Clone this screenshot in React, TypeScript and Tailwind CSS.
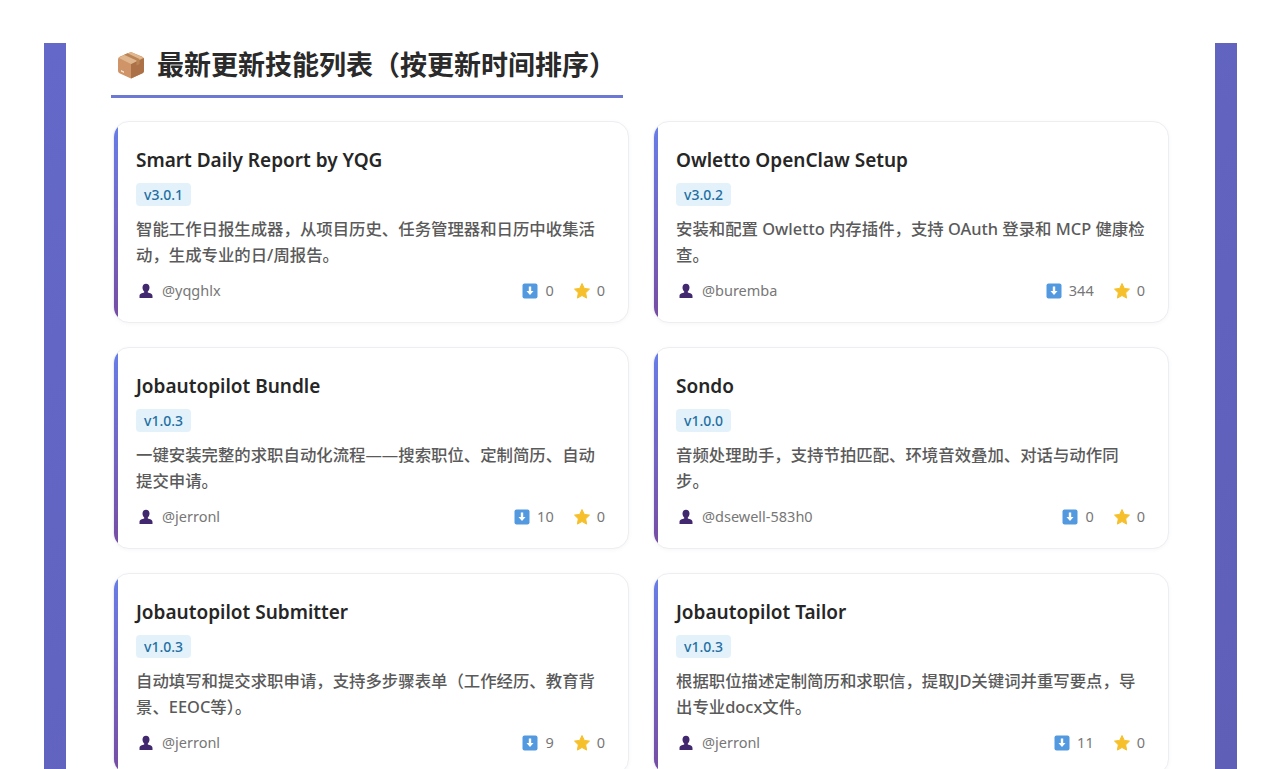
const skills = [
  { name: "Smart Daily Report by YQG", version: "v3.0.1", desc: "智能工作日报生成器，从项目历史、任务管理器和日历中收集活动，生成专业的日/周报告。", author: "@yqghlx", downloads: 0, stars: 0 },
  { name: "Owletto OpenClaw Setup", version: "v3.0.2", desc: "安装和配置 Owletto 内存插件，支持 OAuth 登录和 MCP 健康检查。", author: "@buremba", downloads: 344, stars: 0 },
  { name: "Jobautopilot Bundle", version: "v1.0.3", desc: "一键安装完整的求职自动化流程——搜索职位、定制简历、自动提交申请。", author: "@jerronl", downloads: 10, stars: 0 },
  { name: "Sondo", version: "v1.0.0", desc: "音频处理助手，支持节拍匹配、环境音效叠加、对话与动作同步。", author: "@dsewell-583h0", downloads: 0, stars: 0 },
  { name: "Jobautopilot Submitter", version: "v1.0.3", desc: "自动填写和提交求职申请，支持多步骤表单（工作经历、教育背景、EEOC等）。", author: "@jerronl", downloads: 9, stars: 0 },
  { name: "Jobautopilot Tailor", version: "v1.0.3", desc: "根据职位描述定制简历和求职信，提取JD关键词并重写要点，导出专业docx文件。", author: "@jerronl", downloads: 11, stars: 0 },
];

function BoxIcon() {
  return (
    <svg width="30" height="30" viewBox="0 0 30 30" className="shrink-0">
      <path d="M15 2 L26 6.500 Q28 7.500 28 9.500 L28 21 Q28 22.500 26.500 23.300 L15 28.500 L3.500 23.300 Q2 22.500 2 21 L2 9.500 Q2 7.500 4 6.500 Z" fill="#cf9468" />
      <path d="M15 14 L28 8 L28 21 Q28 22.500 26.500 23.300 L15 28.500 Z" fill="#ad7148" />
      <path d="M2.500 7.700 L15 2 L27.500 7.700 L15 14 Z" fill="#e0b68e" />
      <path d="M8 4.800 L20.500 10.500 L20.500 15.500 L23.500 14 L23.500 9 L11.500 3.300 Z" fill="#b98557" />
      <path d="M5 20 L8 21.500 L8 23 L5 21.500 Z" fill="#f3e6d6" />
    </svg>
  );
}

function PersonIcon() {
  return (
    <svg width="16" height="16" viewBox="0 0 16 16" className="shrink-0">
      <path d="M8 .800c2.200 0 3.500 1.600 3.500 3.700 0 1.700-.7 3.100-1.700 3.900v1.100c2.100.5 4.700 1.300 4.700 3.400v2.100H1.500V12.900c0-2.100 2.600-2.900 4.700-3.400V8.400C5.200 7.600 4.500 6.200 4.500 4.500 4.500 2.400 5.800.800 8 .800Z" fill="#42286f" />
    </svg>
  );
}

function DownloadIcon() {
  return (
    <svg width="16" height="16" viewBox="0 0 16 16" className="shrink-0">
      <rect x="0.500" y="0.500" width="15" height="15" rx="2" fill="#5299e0" />
      <path d="M6.800 3.500h2.400v4.500h2.300L8 12 4.500 8h2.300Z" fill="#fff" />
    </svg>
  );
}

function StarIcon() {
  return (
    <svg width="18" height="18" viewBox="0 0 18 18" className="shrink-0">
      <path d="M9 1.500l2.300 4.900 5.200.7-3.800 3.700.9 5.300L9 13.500l-4.600 2.600.9-5.300L1.500 7.100l5.200-.7Z" fill="#f6c02c" stroke="#f6c02c" strokeLinejoin="round" />
    </svg>
  );
}

function SkillCard({ name, version, desc, author, downloads, stars }: (typeof skills)[number]) {
  return (
    <div className="relative overflow-hidden rounded-2xl border border-[#eceef2] bg-white pt-6 pr-[23px] pb-[21px] pl-[22px] shadow-[0_1px_4px_rgba(0,0,0,0.04)]">
      <div className="absolute top-0 bottom-0 left-0 w-[4px] bg-gradient-to-b from-[#667eea] to-[#764ba2]" />
      <h3 className="h-7 text-[19px] leading-7 font-semibold text-[#262626]">{name}</h3>
      <div className="mt-[9px] flex">
        <span className="h-[23px] rounded-[4px] bg-[#e3f2fa] px-2 text-[14px] leading-[23px] font-medium text-[#1f6fa3]">{version}</span>
      </div>
      <p className="mt-[10px] h-[52px] text-[16.400px] leading-[26px] font-medium text-[#5a5a5a]">{desc}</p>
      <div className="mt-[13px] flex h-5 items-center justify-between text-[14.500px] text-[#777]">
        <div className="flex items-center gap-[8px] pl-[2px]">
          <PersonIcon />
          <span>{author}</span>
        </div>
        <div className="flex items-center">
          <DownloadIcon />
          <span className="ml-[7px]">{downloads}</span>
          <span className="ml-[19px]"><StarIcon /></span>
          <span className="ml-[6px]">{stars}</span>
        </div>
      </div>
    </div>
  );
}

export default function App() {
  return (
    <div className="h-[769px] overflow-hidden bg-white pt-[43px] pl-11 font-['Noto_Sans','Noto_Sans_CJK_SC',sans-serif]">
      <div className="h-[726px] w-[1193px] bg-gradient-to-br from-[#6468c8] to-[#5f5fb8] px-[22px]">
        <div className="h-full bg-white pt-[1px] pr-[46px] pl-[45px]">
          <div className="flex h-[54px] w-[512px] items-center gap-[11px] border-b-[3px] border-[#6b79d4] pb-[10px] pl-[5px]">
            <BoxIcon />
            <h2 className="text-[27px] leading-none font-bold whitespace-nowrap text-[#2a2a2a]">最新更新技能列表（按更新时间排序）</h2>
          </div>
          <div className="mt-[23px] ml-[2px] grid grid-cols-2 gap-6">
            {skills.map((s) => (
              <SkillCard key={s.name} {...s} />
            ))}
          </div>
        </div>
      </div>
    </div>
  );
}
